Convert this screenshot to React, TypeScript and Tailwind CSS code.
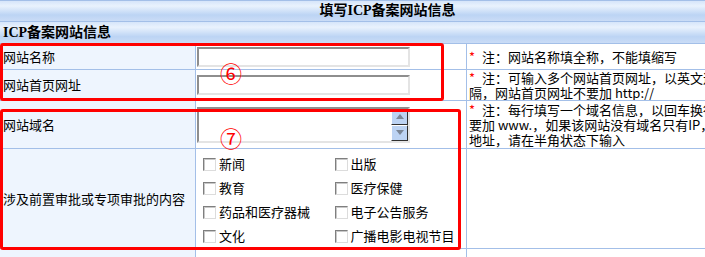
export default function App() {
  const boxes = [
    ["新闻", "出版"],
    ["教育", "医疗保健"],
    ["药品和医疗器械", "电子公告服务"],
    ["文化", "广播电影电视节目"],
  ];

  return (
    <div className="relative w-[705px] h-[257px] overflow-hidden bg-white text-black text-[13px] font-['Noto_Sans_CJK_SC','Noto_Sans',sans-serif]">
      <div className="w-[775px] border-t border-[#a3bfe8]">
        {/* title bars */}
        <div className="h-[21px] border-b border-[#a3bfe8] bg-[linear-gradient(to_bottom,#d6e5fa_0%,#e9f2fd_25%,#bcd4f4_70%,#cadcf6_100%)] flex items-center justify-center">
          <span className="text-[14px] font-bold leading-[16px] font-['Liberation_Serif','Noto_Sans_CJK_SC',serif]">填写ICP备案网站信息</span>
        </div>
        <div className="h-[22px] border-b border-[#a3bfe8] bg-[linear-gradient(to_bottom,#d6e5fa_0%,#e9f2fd_25%,#bcd4f4_70%,#cadcf6_100%)] flex items-center pl-[3px]">
          <span className="text-[14px] font-bold leading-[16px] font-['Liberation_Serif','Noto_Sans_CJK_SC',serif]">ICP备案网站信息</span>
        </div>

        {/* 网站名称 */}
        <div className="flex h-[26px] border-b border-[#a3bfe8]">
          <div className="w-[196px] shrink-0 border-r border-[#a3bfe8] bg-[#eef5fe] flex items-center pl-[3px]">网站名称</div>
          <div className="w-[271px] shrink-0 border-r border-[#a3bfe8] flex items-center pl-[1px]">
            <input readOnly className="w-[213px] h-[20px] border-2 border-t-[#8e8e8e] border-l-[#8e8e8e] border-r-[#e4e4e4] border-b-[#e4e4e4] bg-white" />
          </div>
          <div className="flex-1 min-w-0 overflow-hidden flex items-center pl-[2px] leading-[15px] whitespace-nowrap">
            <span className="inline-block w-[13px] text-[#ff0000]">*</span>注：网站名称填全称，不能填缩写
          </div>
        </div>

        {/* 网站首页网址 */}
        <div className="flex h-[31px] border-b border-[#a3bfe8]">
          <div className="w-[196px] shrink-0 border-r border-[#a3bfe8] bg-[#eef5fe] flex items-center pl-[3px]">网站首页网址</div>
          <div className="w-[271px] shrink-0 border-r border-[#a3bfe8] flex items-center pl-[1px]">
            <input readOnly className="w-[213px] h-[20px] border-2 border-t-[#8e8e8e] border-l-[#8e8e8e] border-r-[#e4e4e4] border-b-[#e4e4e4] bg-white" />
          </div>
          <div className="flex-1 min-w-0 overflow-hidden flex flex-col justify-center pl-[2px] leading-[15px] whitespace-nowrap">
            <div><span className="inline-block w-[13px] text-[#ff0000]">*</span>注：可输入多个网站首页网址，以英文逗号分</div>
            <div>隔，网站首页网址不要加 http://</div>
          </div>
        </div>

        {/* 网站域名 */}
        <div className="flex h-[48px] border-b border-[#a3bfe8]">
          <div className="w-[196px] shrink-0 border-r border-[#a3bfe8] bg-[#eef5fe] flex items-center pl-[3px]">网站域名</div>
          <div className="w-[271px] shrink-0 border-r border-[#a3bfe8] flex items-center pl-[1px]">
            <div className="w-[213px] h-[36px] border-2 border-t-[#8e8e8e] border-l-[#8e8e8e] border-r-[#e4e4e4] border-b-[#e4e4e4] bg-white flex justify-end">
              <div className="w-[17px] flex flex-col">
                <div className="h-[16px] bg-[#bcd3f3] border border-t-white border-l-white border-r-[#303030] border-b-[#303030] flex items-center justify-center">
                  <svg width="8" height="5" viewBox="0 0 8 5"><path d="M4 0L8 5H0Z" fill="#7a8696" /></svg>
                </div>
                <div className="h-[16px] bg-[#bcd3f3] border border-t-white border-l-white border-r-[#303030] border-b-[#303030] flex items-center justify-center">
                  <svg width="8" height="5" viewBox="0 0 8 5"><path d="M0 0H8L4 5Z" fill="#7a8696" /></svg>
                </div>
              </div>
            </div>
          </div>
          <div className="flex-1 min-w-0 overflow-hidden flex flex-col justify-center pl-[2px] leading-[15px] whitespace-nowrap">
            <div><span className="inline-block w-[13px] text-[#ff0000]">*</span>注：每行填写一个域名信息，以回车换行分隔，不需</div>
            <div>要加 www.，如果该网站没有域名只有IP，请填写IP</div>
            <div>地址，请在半角状态下输入</div>
          </div>
        </div>

        {/* 前置审批 */}
        <div className="flex h-[100px] border-b border-[#a3bfe8]">
          <div className="w-[196px] shrink-0 border-r border-[#a3bfe8] bg-[#eef5fe] flex items-center pl-[3px]">涉及前置审批或专项审批的内容</div>
          <div className="w-[271px] shrink-0 border-r border-[#a3bfe8] pt-[3px] pl-[7px]">
            {boxes.map((row) => (
              <div key={row[0]} className="flex h-[24px] items-center">
                {row.map((label) => (
                  <div key={label} className="w-[134px] flex items-center gap-[3px]">
                    <span className="w-[13px] h-[13px] border border-t-[#7f7f7f] border-l-[#7f7f7f] border-r-[#dcdcdc] border-b-[#dcdcdc] bg-white shadow-[inset_1px_1px_0_#c8c8c8]" />
                    <span className="leading-[16px]">{label}</span>
                  </div>
                ))}
              </div>
            ))}
          </div>
          <div className="flex-1" />
        </div>

        <div className="flex h-[20px]">
          <div className="w-[196px] shrink-0 border-r border-[#a3bfe8] bg-[#eef5fe]" />
          <div className="w-[271px] shrink-0 border-r border-[#a3bfe8]" />
          <div className="flex-1" />
        </div>
      </div>

      {/* annotations */}
      <div className="absolute left-0 top-[43px] w-[444px] h-[58px] border-[3px] border-[#ff0000] rounded-[3px]" />
      <div className="absolute left-0 top-[109px] w-[461px] h-[141px] border-[3px] border-[#ff0000] rounded-[3px]" />
      <span className="absolute left-[220px] top-[61px] text-[22px] leading-[22px] text-[#ff0000]">⑥</span>
      <span className="absolute left-[220px] top-[126px] text-[22px] leading-[22px] text-[#ff0000]">⑦</span>
    </div>
  );
}
